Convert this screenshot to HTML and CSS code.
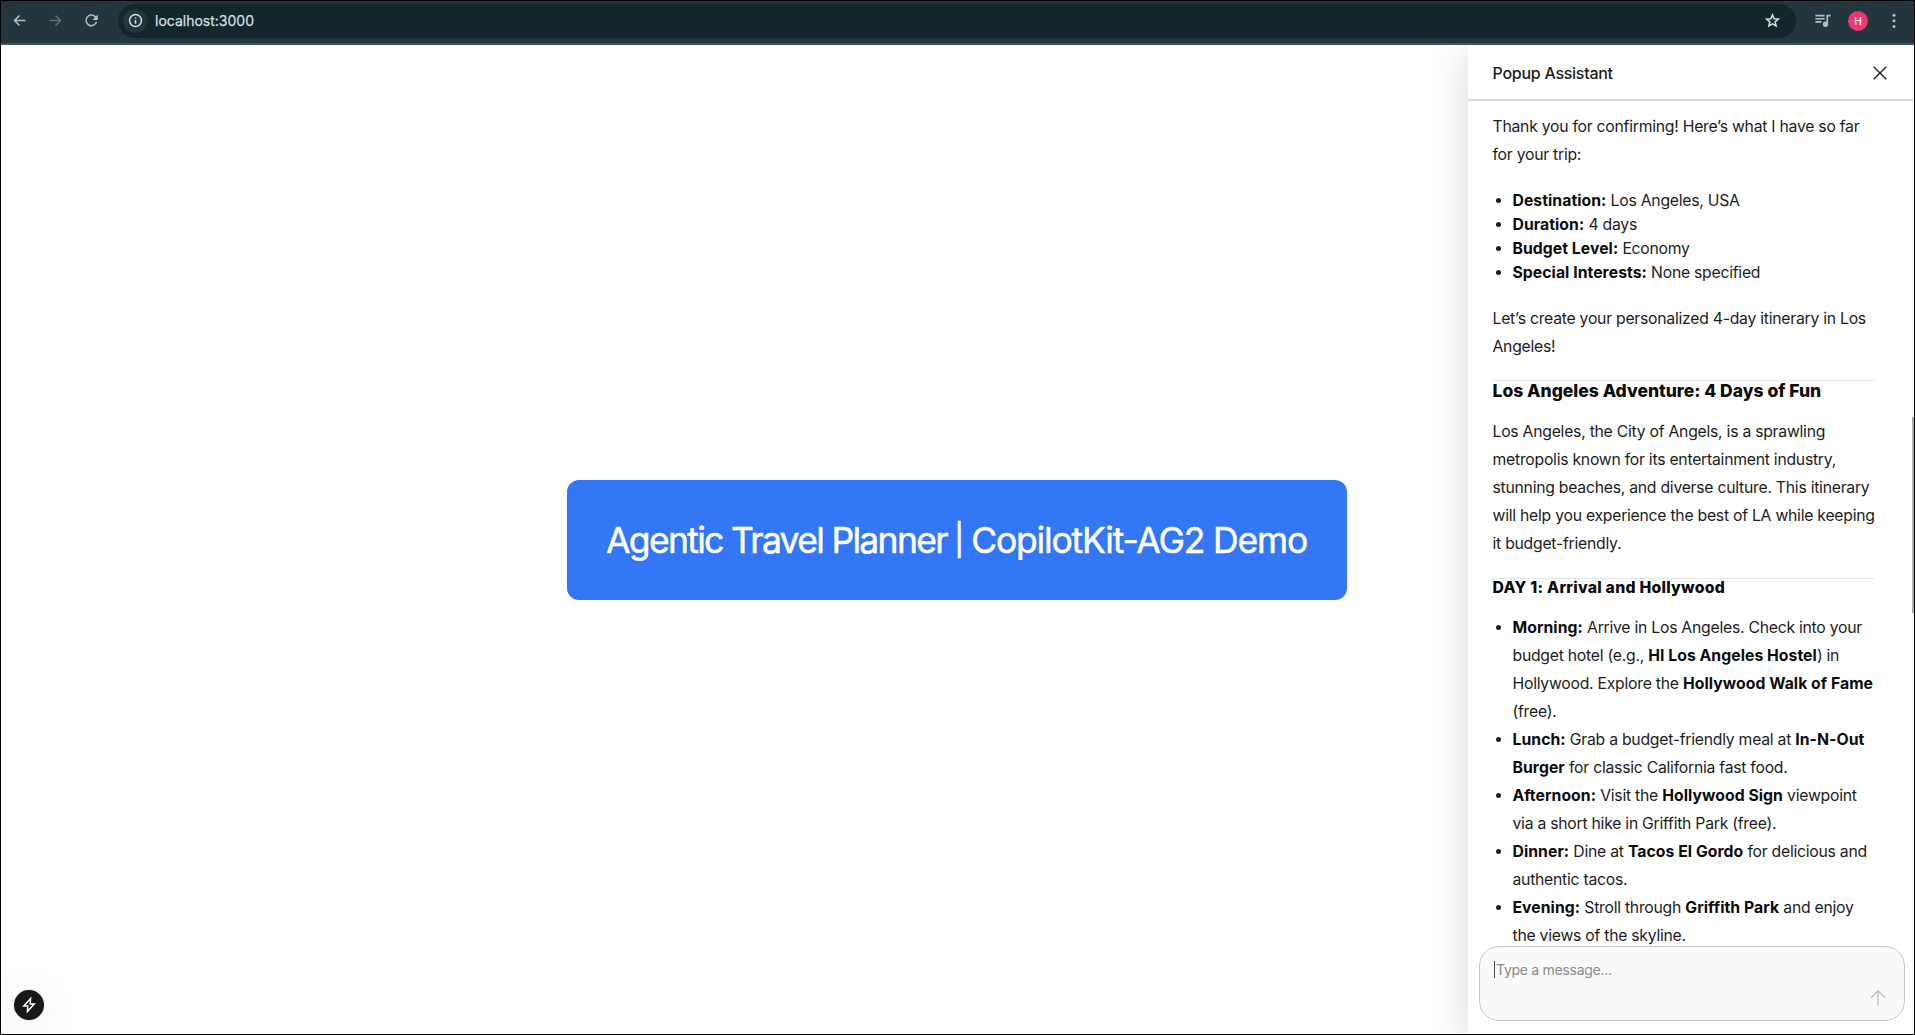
FILE: index.html
```html
<!DOCTYPE html>
<html lang="en">
<head>
<meta charset="utf-8">
<title>Agentic Travel Planner</title>
<link rel="stylesheet" href="styles.css">
</head>
<body>
<div class="window">
  <header class="toolbar">
    <nav class="nav">
      <svg class="ico" viewBox="0 0 24 24"><path d="M21.500 12H4M12 4L4 12l8 8"/></svg>
      <svg class="ico dim" viewBox="0 0 24 24"><path d="M2.500 12H20M12 4l8 8-8 8"/></svg>
      <svg class="ico" viewBox="0 0 24 24"><path d="M20 14A8.500 8.500 0 1 1 17.800 5.800L20.500 8.500"/><path d="M22 2.500v8.500h-8.500z" fill="currentColor" stroke="none"/></svg>
    </nav>
    <div class="address">
      <span class="info"><svg class="ico" viewBox="0 0 24 24"><circle cx="12" cy="12" r="9.500"/><path d="M12 11v6M12 7v2.200"/></svg></span>
      <span class="url">localhost:3000</span>
      <svg class="ico star" viewBox="0 0 24 24"><path d="M12 3l2.600 6.200 6.700.6-5.100 4.400 1.600 6.600-5.800-3.500-5.800 3.500 1.600-6.600-5.100-4.400 6.700-.6z"/></svg>
    </div>
    <svg class="ico media" viewBox="0 0 24 24"><path d="M2 5h13M2 9.500h13M2 14h8.500"/><path d="M18.700 17V5.200H23.500"/><circle cx="16.200" cy="17.300" r="2.600" fill="currentColor"/></svg>
    <span class="avatar">H</span>
    <svg class="dots" viewBox="0 0 4 16"><circle cx="2" cy="2.200" r="1.500"/><circle cx="2" cy="7.800" r="1.500"/><circle cx="2" cy="13.400" r="1.500"/></svg>
  </header>
  <div class="page">
    <main class="stage"><h1 class="banner"><span class="name">Agentic Travel Planner</span><span class="bar">|</span><span class="product">CopilotKit-AG2 Demo</span></h1></main>
    <aside class="panel">
      <div class="panel-head"><span class="title">Popup Assistant</span>
        <svg class="close" viewBox="0 0 14 14"><path d="M.7.700l12.600 12.600M13.300.700L.7 13.300"/></svg></div>
      <div class="messages">
        <p>Thank you for confirming! Here’s what I have so far<br>for your trip:</p>
        <ul class="tight">
          <li><b>Destination:</b> Los Angeles, USA</li>
          <li><b>Duration:</b> 4 days</li>
          <li><b>Budget Level:</b> Economy</li>
          <li><b>Special Interests:</b> None specified</li>
        </ul>
        <p class="lead">Let’s create your personalized 4-day itinerary in Los<br>Angeles!</p>
        <hr>
        <h2>Los Angeles Adventure: 4 Days of Fun</h2>
        <p>Los Angeles, the City of Angels, is a sprawling<br>metropolis known for its entertainment industry,<br>stunning beaches, and diverse culture. This itinerary<br>will help you experience the best of LA while keeping<br>it budget-friendly.</p>
        <hr>
        <h3>DAY 1: Arrival and Hollywood</h3>
        <ul>
          <li><b>Morning:</b> Arrive in Los Angeles. Check into your<br>budget hotel (e.g., <b>HI Los Angeles Hostel</b>) in<br>Hollywood. Explore the <b>Hollywood Walk of Fame</b><br>(free).</li>
          <li><b>Lunch:</b> Grab a budget-friendly meal at <b>In-N-Out<br>Burger</b> for classic California fast food.</li>
          <li><b>Afternoon:</b> Visit the <b>Hollywood Sign</b> viewpoint<br>via a short hike in Griffith Park (free).</li>
          <li><b>Dinner:</b> Dine at <b>Tacos El Gordo</b> for delicious and<br>authentic tacos.</li>
          <li><b>Evening:</b> Stroll through <b>Griffith Park</b> and enjoy<br>the views of the skyline.</li>
        </ul>
      </div>
      <div class="composer"><span class="placeholder">Type a message...</span>
        <svg class="send" viewBox="0 0 16 16"><path d="M8 15.500V1M.8 8L8 .800 15.200 8"/></svg></div>
      <i class="scroll"></i>
    </aside>
    <button class="dev" aria-label="Dev tools"><svg viewBox="0 0 16 16"><path d="M9.600 1.400L2.800 9h4L6.400 14.600 13.200 7H9.200z"/></svg></button>
  </div>
</div>
</body>
</html>
```
FILE: styles.css
```css
* { box-sizing: border-box; }
body { margin: 0; font-family: Inter, "Liberation Sans", sans-serif; color: #1c1c1c; background: #000; }
.window { width: 1915px; height: 1035px; padding: 1px; display: flex; flex-direction: column; overflow: hidden; }
.toolbar { height: 44px; background: #24363d; border-bottom: 2px solid #45545a; display: flex; align-items: center; padding: 0 18px 3px 11px; flex: none; color: #a9c4ca; }
.ico { width: 15px; height: 15px; fill: none; stroke: currentColor; stroke-width: 2.4; display: block; }
.nav { display: flex; gap: 21px; width: 106px; }
.dim { color: #5d7077; }
.address { width: 1678px; height: 34px; border-radius: 17px; background: #12262b; display: flex; align-items: center; padding: 0 16px 0 5px; color: #d5dfe1; }
.info { width: 24px; height: 24px; border-radius: 50%; background: #24363d; display: grid; place-items: center; margin-right: 8px; }
.url { font-size: 14px; flex: 1; -webkit-text-stroke: .25px currentColor; }
.media { margin: 0 17px 0 18px; width: 17px; height: 17px; }
.avatar { width: 20px; height: 20px; border-radius: 50%; background: #f0386f; color: #fff; font-size: 10px; font-weight: 500; display: grid; place-items: center; }
.dots { width: 4px; height: 16px; margin-left: auto; fill: currentColor; }
.page { flex: 1; display: flex; background: #fff; position: relative; min-height: 0; overflow: hidden; }
.stage { flex: 1; display: flex; align-items: center; padding-left: 566px; }
.banner { margin: 0; width: 780px; height: 120px; flex: none; display: flex; align-items: center; padding: 2px 40px 0 39px; background: #3377f6; color: #fff; border-radius: 12px; font-size: 35.5px; font-weight: 400; white-space: nowrap; -webkit-text-stroke: .5px #fff; }
.name { letter-spacing: -1.68px; }
.bar { flex: 1; text-align: center; font-size: 31px; line-height: 40px; padding-bottom: 1px; }
.product { letter-spacing: -1.18px; }
.panel { width: 446px; flex: none; background: #fff; position: relative; display: flex; flex-direction: column; padding-bottom: 13px; box-shadow: 0 8px 40px rgba(0,0,0,.16); }
.panel-head { height: 56px; border-bottom: 2px solid #d9d9d9; display: flex; align-items: center; justify-content: space-between; padding: 2px 27px 0 24.5px; flex: none; }
.title { font-size: 16px; font-weight: 500; letter-spacing: -.27px; }
.close { width: 14px; height: 14px; fill: none; stroke: #222; stroke-width: 1.4; }
.messages { flex: 1; min-height: 0; overflow: hidden; padding: 12px 40px 0 24.5px; font-size: 15.75px; letter-spacing: -.25px; line-height: 28px; white-space: nowrap; }
.messages p, .messages ul { margin: 0 0 20px; }
.messages .lead { margin-bottom: 19px; }
.messages ul { padding: 0 0 0 20px; }
.messages .tight { line-height: 24px; }
.messages hr { border: 0; height: 1px; background: #e5e7eb; margin: 0; }
h2, h3 { margin: 0; font-weight: 800; color: #0c0c0c; }
h2 { font-size: 17.5px; line-height: 20px; margin-bottom: 17px; letter-spacing: 0; }
h3 { font-size: 15.75px; line-height: 18px; margin-bottom: 17px; letter-spacing: .25px; }
b { font-weight: 700; letter-spacing: .05px; color: #0c0c0c; }
.composer { flex: none; height: 75px; margin: 0 9px 0 11px; border: 1px solid #c8c8c8; border-radius: 20px; background: #fafafa; padding: 13px 14px; font-size: 14px; line-height: 20px; letter-spacing: -.28px; color: #8a8a8a; position: relative; }
.placeholder { display: inline-block; height: 17px; line-height: 17px; border-left: 1px solid #444; padding-left: 1px; }
.send { position: absolute; right: 18px; bottom: 14px; width: 16px; height: 16px; fill: none; stroke: #bbb; stroke-width: 1.2; }
.scroll { position: absolute; right: 0; top: 372px; width: 2px; height: 196px; background: #aaa; }
.dev { position: absolute; left: 13px; bottom: 14px; width: 30px; height: 30px; border-radius: 50%; border: 0; padding: 7px; background: #18181b; box-shadow: 0 0 0 1px rgba(0,0,0,.08), 0 8px 48px rgba(0,0,0,.1); }
.dev svg { fill: none; stroke: #fff; stroke-width: 1.5; display: block; }
```
